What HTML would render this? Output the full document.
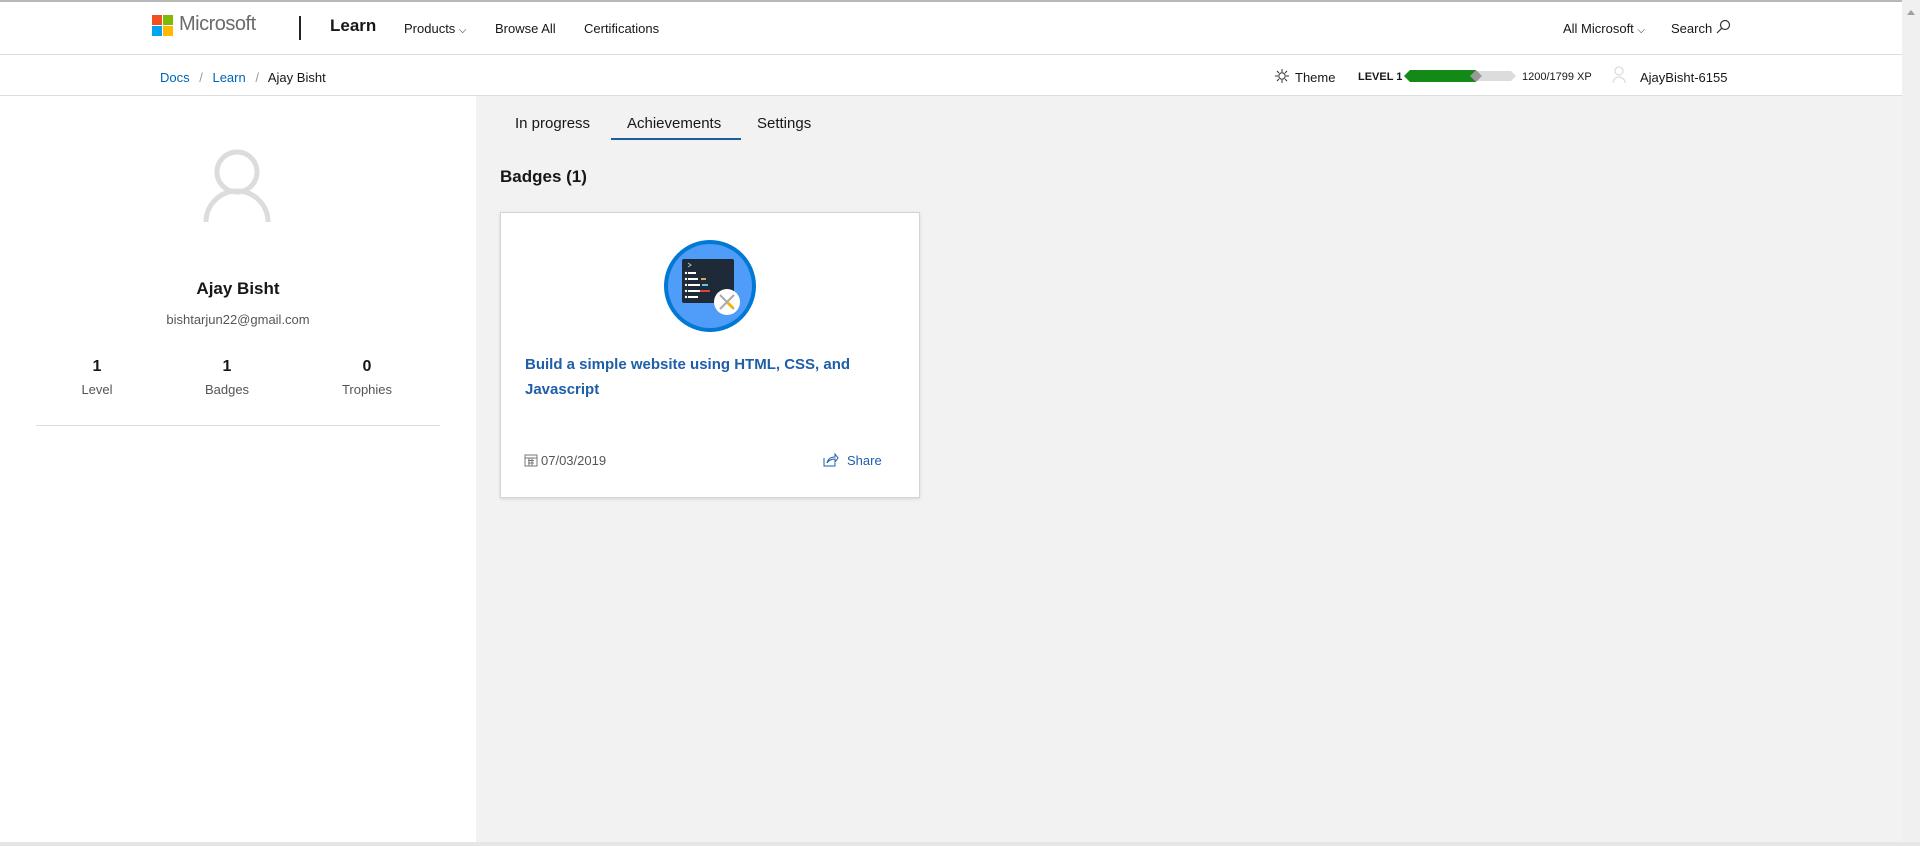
<!DOCTYPE html>
<html><head><meta charset="utf-8"><style>
*{margin:0;padding:0;box-sizing:border-box}
body{width:1920px;height:846px;overflow:hidden;background:#f2f2f2;font-family:"Segoe UI","Liberation Sans",sans-serif;color:#171717;position:relative}
.a{position:absolute;white-space:nowrap}
.hdr{position:absolute;left:0;top:0;width:1902px;height:55px;background:#fff;border-top:2px solid #b8b8b8;border-bottom:1px solid #ddd}
.bc{position:absolute;left:0;top:55px;width:1902px;height:41px;background:#fff;border-bottom:1px solid #ddd}
.left{position:absolute;left:0;top:96px;width:476px;height:746px;background:#fff}
.sb{position:absolute;left:1902px;top:0;width:18px;height:846px;background:#f0f0f0}
.card{position:absolute;left:500px;top:212px;width:420px;height:286px;background:#fff;border:1px solid #d4d4d4;box-shadow:0 1px 3px rgba(0,0,0,.12)}
.t13{font-size:13px}
</style></head><body>
<div class="hdr"></div>
<div class="bc"></div>
<div class="left"></div>
<div class="sb"><div class="a" style="left:5px;top:10px;width:0;height:0;border-left:4px solid transparent;border-right:4px solid transparent;border-bottom:5px solid #a0a0a0"></div></div>
<div class="a" style="left:0;top:842px;width:1920px;height:4px;background:#e6e6e6"></div>

<div class="a" style="left:152px;top:15px;width:10px;height:10px;background:#f25022"></div>
<div class="a" style="left:163px;top:15px;width:10px;height:10px;background:#7fba00"></div>
<div class="a" style="left:152px;top:26px;width:10px;height:10px;background:#00a4ef"></div>
<div class="a" style="left:163px;top:26px;width:10px;height:10px;background:#ffb900"></div>
<div class="a" style="left:179px;top:13px;font-size:20px;color:#6b6b6b;letter-spacing:-0.5px">Microsoft</div>
<div class="a" style="left:299px;top:16px;width:2px;height:24px;background:#222"></div>
<div class="a" style="left:330px;top:16px;font-size:17px;font-weight:600">Learn</div>
<div class="a t13" style="left:404px;top:21px">Products <span style="font-size:10px">⌵</span></div>
<div class="a t13" style="left:495px;top:21px">Browse All</div>
<div class="a t13" style="left:584px;top:21px">Certifications</div>
<div class="a t13" style="left:1563px;top:21px">All Microsoft <span style="font-size:10px">⌵</span></div>
<div class="a t13" style="left:1671px;top:21px">Search</div>
<svg class="a" style="left:1715px;top:19px" width="16" height="16" viewBox="0 0 16 16"><circle cx="10" cy="6" r="4.5" fill="none" stroke="#333" stroke-width="1.2"/><line x1="6.8" y1="9.2" x2="2" y2="14" stroke="#333" stroke-width="1.2"/></svg>

<div class="a t13" style="left:160px;top:70px;color:#0065b3">Docs <span style="color:#999;margin:0 6px">/</span> Learn <span style="color:#999;margin:0 6px">/</span> <span style="color:#171717">Ajay Bisht</span></div>
<svg class="a" style="left:1274px;top:68px" width="16" height="16" viewBox="0 0 16 16" stroke="#333" stroke-width="1"><circle cx="8" cy="8" r="3.2" fill="none"/><path d="M8 1v3M8 12v3M1 8h3M12 8h3M3 3l2 2M11 11l2 2M13 3l-2 2M5 11l-2 2"/></svg>
<div class="a t13" style="left:1295px;top:70px">Theme</div>
<div class="a" style="left:1358px;top:71px;font-size:11px;font-weight:700">LEVEL 1</div>
<div class="a" style="left:1404px;top:71px;width:112px;height:10px;background:#dcdcdc;clip-path:polygon(5px 0,107px 0,112px 5px,107px 10px,5px 10px,0 5px)"></div>
<div class="a" style="left:1404px;top:70px;width:72px;height:12px;background:#138a17;clip-path:polygon(6px 0,72px 0,72px 12px,6px 12px,0 6px)"></div>
<div class="a" style="left:1470px;top:70px;width:12px;height:12px;background:#999;clip-path:polygon(50% 0,100% 50%,50% 100%,0 50%)"></div>
<div class="a" style="left:1522px;top:71px;font-size:11px">1200/1799 XP</div>
<svg class="a" style="left:1612px;top:66px" width="14" height="18" viewBox="0 0 14 18" fill="none" stroke="#ddd" stroke-width="1.3"><circle cx="7" cy="5" r="4"/><path d="M1 17a6 6 0 0 1 12 0"/></svg>
<div class="a t13" style="left:1640px;top:70px">AjayBisht-6155</div>

<svg class="a" style="left:203px;top:148px" width="68" height="76" viewBox="0 0 68 76" fill="none" stroke="#dcdcdc" stroke-width="5"><circle cx="34" cy="24" r="20"/><path d="M3 74a31 31 0 0 1 62 0"/></svg>
<div class="a" style="left:0;width:476px;top:279px;text-align:center;font-size:17px;font-weight:600">Ajay Bisht</div>
<div class="a" style="left:0;width:476px;top:312px;text-align:center;font-size:13px;color:#555">bishtarjun22@gmail.com</div>
<div class="a" style="left:47px;width:100px;top:358px;text-align:center;font-size:16px;font-weight:600">1</div>
<div class="a" style="left:177px;width:100px;top:358px;text-align:center;font-size:16px;font-weight:600">1</div>
<div class="a" style="left:317px;width:100px;top:358px;text-align:center;font-size:16px;font-weight:600">0</div>
<div class="a" style="left:47px;width:100px;top:382px;text-align:center;font-size:13px;color:#555">Level</div>
<div class="a" style="left:177px;width:100px;top:382px;text-align:center;font-size:13px;color:#555">Badges</div>
<div class="a" style="left:317px;width:100px;top:382px;text-align:center;font-size:13px;color:#555">Trophies</div>
<div class="a" style="left:36px;top:425px;width:404px;height:1px;background:#ddd"></div>

<div class="a" style="left:515px;top:115px;font-size:15px">In progress</div>
<div class="a" style="left:627px;top:115px;font-size:15px">Achievements</div>
<div class="a" style="left:757px;top:115px;font-size:15px">Settings</div>
<div class="a" style="left:611px;top:138px;width:130px;height:2px;background:#1d5d99"></div>
<div class="a" style="left:500px;top:167px;font-size:17px;font-weight:600">Badges (1)</div>

<div class="card"></div>
<svg class="a" style="left:662px;top:238px" width="96" height="96" viewBox="0 0 96 96">
<circle cx="48" cy="48" r="46" fill="#0078d4"/><circle cx="48" cy="48" r="42" fill="#4f9cf9"/>
<rect x="20" y="21" width="52" height="44" rx="2" fill="#1e2a38"/>
<g stroke-width="2"><path d="M26 35h8M26 41h10M26 47h12M26 53h12M26 59h10" stroke="#fff"/><path d="M39 41h5" stroke="#e8a24a"/><path d="M38 53h10" stroke="#e04040"/><path d="M40 47h6" stroke="#5ec8e0"/></g>
<g fill="#fff"><circle cx="24" cy="35" r="1.2"/><circle cx="24" cy="41" r="1.2"/><circle cx="24" cy="47" r="1.2"/><circle cx="24" cy="53" r="1.2"/><circle cx="24" cy="59" r="1.2"/></g>
<path d="M26 25l3 2-3 2" stroke="#bbb" fill="none"/>
<circle cx="65" cy="64" r="13" fill="#fff"/><path d="M58 57l14 14M72 57l-14 14" stroke="#aaa" stroke-width="2"/><path d="M66 65l5 5" stroke="#f2b600" stroke-width="3"/>
</svg>
<div class="a" style="left:525px;top:352px;font-size:15px;font-weight:600;color:#1f5ea8;line-height:25px">Build a simple website using HTML, CSS, and<br>Javascript</div>
<svg class="a" style="left:524px;top:453px" width="14" height="14" viewBox="0 0 14 14" fill="none" stroke="#777"><rect x="1" y="2" width="12" height="11"/><path d="M1 5h12M4 7.5h6M4 10h6M5 5v8M8 5v8"/></svg>
<div class="a t13" style="left:541px;top:453px;color:#555">07/03/2019</div>
<svg class="a" style="left:823px;top:452px" width="16" height="15" viewBox="0 0 16 15" fill="none" stroke="#1f5ea8"><path d="M1 6v8h11v-3"/><path d="M4 11c1-4 4-6 8-6V2l3 4-3 4V7c-3 0-6 1-8 4z"/></svg>
<div class="a t13" style="left:847px;top:453px;color:#1f5ea8">Share</div>
</body></html>
